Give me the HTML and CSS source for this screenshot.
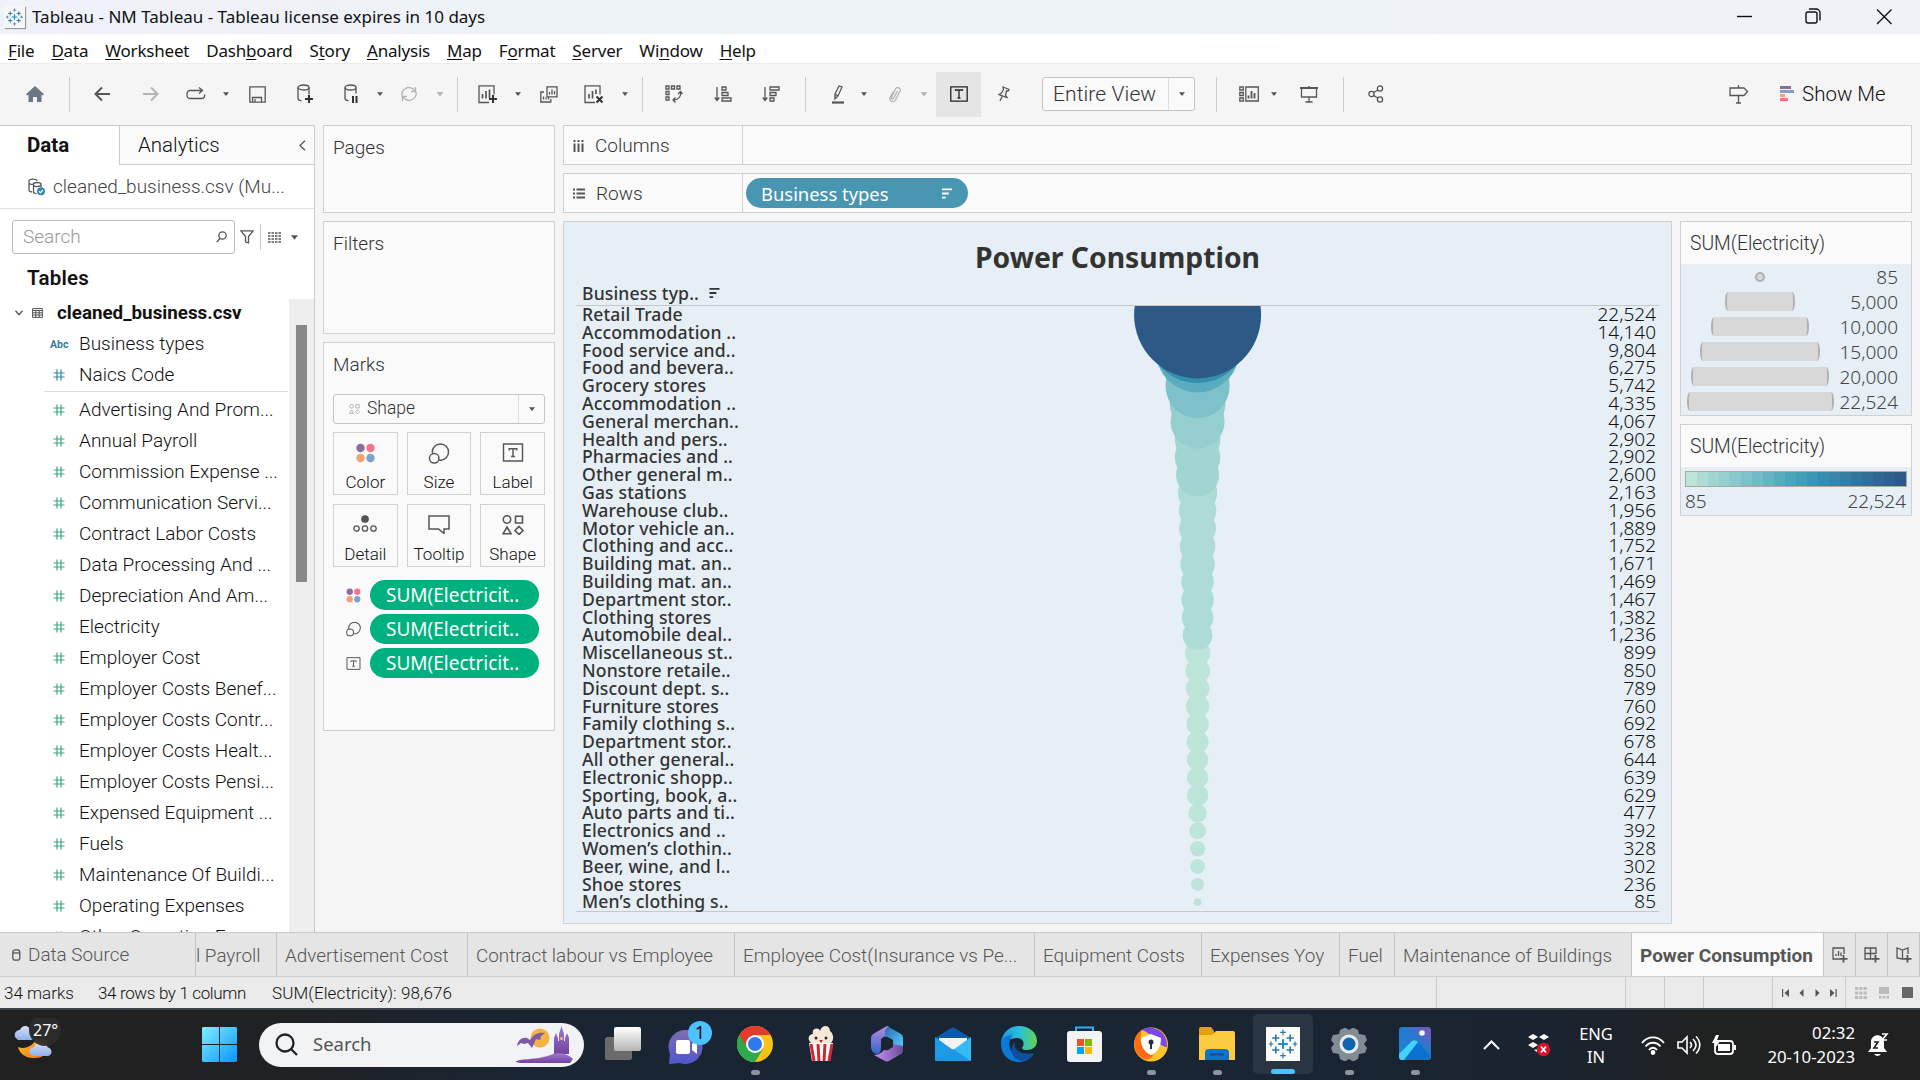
FILE: index.html
```html
<!DOCTYPE html>
<html lang="en">
<head>
<meta charset="utf-8">
<title>Tableau - NM Tableau</title>
<link rel="stylesheet" href="styles.css">
</head>
<body>
<svg class="defs" width="0" height="0">
  <symbol id="caret" viewBox="0 0 8 5"><path d="M0 0h8L4 5z" fill="currentColor"/></symbol>
  <symbol id="dots" viewBox="0 0 20 20"><circle cx="5" cy="5" r="4.2" fill="#8a6f9c"/><circle cx="15" cy="5" r="4.2" fill="#f9728a"/><circle cx="5" cy="15" r="4.2" fill="#f3a173"/><circle cx="15" cy="15" r="4.2" fill="#7ba3cc"/></symbol>
  <symbol id="size" viewBox="0 0 22 22"><g fill="none" stroke="currentColor" stroke-width="1.5"><circle cx="12.5" cy="9.5" r="8.5"/><circle cx="6" cy="16" r="5" fill="#fafafa"/></g></symbol>
  <symbol id="label" viewBox="0 0 22 20"><g fill="none" stroke="currentColor" stroke-width="1.5"><path d="M1 1h20v18H1zM7 8V6h8v2M11 6v8M9 14.3h4"/></g></symbol>
  <symbol id="shapes" viewBox="0 0 22 20"><g fill="none" stroke="currentColor" stroke-width="1.6"><circle cx="5" cy="4.5" r="3.7"/><path d="M13.5 1.2h7v6.8h-7zM5 12l4 6.8H1zM17 11.5l4 4-4 4-4-4z"/></g></symbol>
  <symbol id="hash" viewBox="0 0 12 12"><path d="M4 .5v11M8 .5v11M.5 4h11M.5 8h11" fill="none" stroke="currentColor" stroke-width="1.2"/></symbol>
  <symbol id="sort" viewBox="0 0 11 11"><path d="M0 1h11M0 5.5h7.5M0 10h4" stroke="currentColor" stroke-width="2"/></symbol>
  <symbol id="tab-logo" viewBox="0 0 40 40"><g stroke="#2d75a8" stroke-width="2" fill="none"><path d="M20 14v12M14 20h12" stroke-width="2.6" stroke="#1b8fc4"/><path d="M11 8v9M6.500 12.500h9M29 8v9M24.500 12.500h9M11 23v9M6.500 27.500h9M29 23v9M24.500 27.500h9"/><path d="M20 2v7M16.500 5.500h7M20 31v7M16.500 34.500h7M5 17v6M2 20h6M35 17v6M32 20h6" stroke-width="1.500"/></g></symbol>
</svg>

<header class="titlebar">
  <span class="app-logo"><svg width="19" height="20"><use href="#tab-logo"/></svg></span>
  <span class="app-title">Tableau - NM Tableau - Tableau license expires in 10 days</span>
  <svg class="winctl" width="160" height="20" fill="none" stroke="#111" stroke-width="1.4"><path d="M1 9.500h15"/><rect x="70" y="5" width="11" height="11" rx="2"/><path d="M73 2h7a4 4 0 0 1 4 4v7.500"/><path d="M141 2.500l14.500 14.500M155.500 2.500L141 17"/></svg>
</header>

<nav class="menubar">
  <span><u>F</u>ile</span><span><u>D</u>ata</span><span><u>W</u>orksheet</span><span>Dash<u>b</u>oard</span><span>S<u>t</u>ory</span><span><u>A</u>nalysis</span><span><u>M</u>ap</span><span>F<u>o</u>rmat</span><span><u>S</u>erver</span><span>Wi<u>n</u>dow</span><span><u>H</u>elp</span>
</nav>

<div class="toolbar">
  <svg width="18" height="17" fill="#6b7684"><path d="M9 0L0 8.300l1.200 1.200 1.300-1.100V16H7v-5h4v5h4.500V8.400l1.300 1.100L18 8.300z"/></svg>
  <i class="sep first"></i>
  <svg width="17" height="16" class="ln w2"><path d="M16 8H1.500M8 1.500L1.500 8 8 14.500"/></svg>
  <svg width="17" height="16" class="ln w2 dim"><path d="M1 8h14.500M9 1.500L15.500 8 9 14.500"/></svg>
  <svg width="20" height="14" class="ln"><path d="M9 11.500H4A3 3 0 0 1 1 8.500v-2a3 3 0 0 1 3-3h12M13 .5l3.500 3-3.500 3M9 11.500h7a3 3 0 0 0 2.500-4"/></svg>
  <svg class="caret"><use href="#caret"/></svg>
  <svg width="17" height="17" class="ln"><path d="M.8.8h15.400v15.400H.8zM3.500 16v-4.500h9V16M6 16v-3"/></svg>
  <svg width="18" height="20" class="ln"><ellipse cx="7.500" cy="3.500" rx="5.500" ry="2.500"/><path d="M2 3.500v11c0 1.300 1 2 3.500 2.300M13 3.500v7"/><path d="M13 11v8M9 15h8" stroke="#333" stroke-width="2"/></svg>
  <svg width="18" height="20" class="ln"><ellipse cx="8.500" cy="3.500" rx="5.500" ry="2.500"/><path d="M3 3.500v11c0 1.300 1 2 3.500 2.300M14 3.500v6"/><path d="M11 12v7M14.500 12v7" stroke="#333" stroke-width="2"/></svg>
  <svg class="caret"><use href="#caret"/></svg>
  <svg width="18" height="16" class="ln dim"><path d="M2 10A7 7 0 0 1 13 3l2 2M16 6a7 7 0 0 1-11 7l-2-2M15.500 1v4.500H11M2.500 15v-4.500H7"/></svg>
  <svg class="caret dim"><use href="#caret"/></svg>
  <i class="sep"></i>
  <svg width="20" height="19" class="ln"><path d="M11 17.500H1V.8h15v8.700"/><path d="M4.500 13.500V9M8 13.500V6M11.500 13.500V4.500" stroke-width="1.700"/><path d="M15 10v8M11 14h8" stroke="#333" stroke-width="2"/></svg>
  <svg class="caret"><use href="#caret"/></svg>
  <svg width="18" height="17" class="ln"><path d="M7 .8h10v10H7zM4 6H.8v10h10v-3M3.500 13.500v-3M6 13.500v-2M8.500 13.500v-2M9.500 8.500V6M12 8.500V3.500M14.500 8.500V5"/></svg>
  <svg width="20" height="19" class="ln"><path d="M11 17.500H1V.8h15v8.700"/><path d="M5 13.500V9M8.500 13.500V6M12 9V4.500" stroke-width="1.700"/><path d="M12.500 11.500l6 6M18.500 11.500l-6 6" stroke="#333" stroke-width="2"/></svg>
  <svg class="caret"><use href="#caret"/></svg>
  <i class="sep"></i>
  <svg width="18" height="18" class="ln"><path d="M1 1h3v3H1zM6.500 1h3v3h-3zM12 1h3v3h-3zM1 6.500h3v3H1zM1 12h3v3H1zM15.500 7c1 5-3 8-7 8M13 9l2.500-2.500L17.500 9M10.500 12.500L8 15l2.500 2.500"/></svg>
  <svg width="18" height="16" class="ln"><path d="M3 1v13M.7 11.500L3 14.500l2.300-3M8 1h4v3H8zM8 6.500h6v3H8zM8 12h9v3H8z"/></svg>
  <svg width="18" height="16" class="ln"><path d="M3 1v13M.7 11.500L3 14.500l2.300-3M8 1h9v3H8zM8 6.500h6v3H8zM8 12h4v3H8z"/></svg>
  <i class="sep"></i>
  <svg width="14" height="19" class="ln"><path d="M4 9l4-8 3 1-4 9-3 3zM4 9l3 2"/><path d="M1 17.500h12" stroke-width="2.200"/></svg>
  <svg class="caret"><use href="#caret"/></svg>
  <svg width="14" height="17" class="ln dim"><path d="M9.500 5l-4 7.500c-.6 1.200-2.600.4-2-1L7.500 3c1.300-2.800 5.800-1 4.500 2L7.500 14c-1.500 3-6.800 1.500-5.300-2.500L5 6"/></svg>
  <svg class="caret dim"><use href="#caret"/></svg>
  <span class="tbtn"><svg width="18" height="16" class="ln dark"><path d="M.8.8h16.400v14.400H.8zM5.500 5V4h7v1M9 4v8M7.500 12h3"/></svg></span>
  <svg width="14" height="16" class="ln"><path d="M7 1l6 2.500-1 1.500-1.500 0-1 4 1.500 2.500L3 8.500 5.500 7l2-3.500zM6 10.500L4 15"/></svg>
  <span class="select view-select"><span>Entire View</span><b><svg class="caret"><use href="#caret"/></svg></b></span>
  <i class="sep"></i>
  <svg width="20" height="16" class="ln"><path d="M.8 1h3.500v3H.8zM.8 6.500h3.500v3H.8zM.8 12h3.500v3H.8zM6.800 1h12.500v14H6.800z"/><path d="M9.500 12.500v-3M12.500 12.500V5M15.500 12.500V7" stroke-width="1.800"/></svg>
  <svg class="caret"><use href="#caret"/></svg>
  <svg width="18" height="17" class="ln"><path d="M0 2h18" stroke-width="2"/><path d="M1.500 3v8h15V3M9 11v5M5.500 16h7M9 0v2"/></svg>
  <i class="sep"></i>
  <svg width="16" height="18" class="ln"><circle cx="3.500" cy="9" r="2.600"/><circle cx="12" cy="3.500" r="2.600"/><circle cx="12" cy="14.500" r="2.600"/><path d="M5.700 7.500L9.800 5M5.700 10.500l4.100 2.500"/></svg>
  <i></i>
  <svg width="20" height="19" class="ln"><path d="M1 3h14l3.500 3.500L15 10.500H1zM9.500 0v3M9.500 10.500v7.500M7 18h5"/></svg>
  <span class="showme"><svg width="14" height="16"><path fill="#8a6f9c" d="M0 0h11v3H0z"/><path fill="#7ba3cc" d="M0 4h14v3H0z"/><path fill="#f3a173" d="M0 8h5v3H0z"/><path fill="#f9728a" d="M0 12h8v3H0z"/></svg>Show Me</span>
</div>

<main class="workspace">
  <aside class="data-pane">
    <div class="pane-tabs"><b>Data</b><span>Analytics<svg width="7" height="11" class="ln"><path d="M6 .8L1 5.500 6 10.200"/></svg></span></div>
    <div class="source"><svg width="18" height="18" class="ln"><path d="M9 3C9 .5 1 .5 1 3v9c0 1 1 1.800 3 2M1 5c1 1.500 3 1.500 4 1M13 6c0-2-7.500-2-7.500 0v8c0 1 1 1.500 3 1.700M13 6v3M5.500 7.500C7 9 11 9 13 7"/><circle cx="13" cy="13.300" r="4" fill="#2e86ab" stroke="none"/><path d="M11 13.300l1.500 1.500 2.500-3" stroke="#fff"/></svg><span>cleaned_business.csv (Mu...</span></div>
    <div class="search-row">
      <div class="search"><span>Search</span><svg width="11" height="12" class="ln"><circle cx="6.500" cy="4.500" r="3.700"/><path d="M4 7.500L.8 11"/></svg></div>
      <svg width="14" height="14" class="ln"><path d="M.8.8h12.400L8.500 6.500v6.300l-3-1V6.500z"/></svg>
      <i class="vline"></i>
      <svg width="13" height="11"><path d="M0 1h13M0 4h13M0 7h13M0 10h13" stroke="#555" stroke-width="1.500" stroke-dasharray="2.500 1"/></svg>
      <svg class="caret"><use href="#caret"/></svg>
    </div>
    <h3>Tables</h3>
    <div class="fields-wrap">
      <div class="fields" id="fields">
        <div class="table-name"><svg width="8" height="6" class="ln"><path d="M.5.8L4 4.800 7.500.8"/></svg><svg width="11" height="10" class="ln thin"><path d="M.6.6h9.800v8.800H.6zM.6 2.500h9.800M.6 4.800h9.800M.6 7h9.800M3.800 2v7.500M7.200 2v7.500"/></svg><b>cleaned_business.csv</b></div>
        <div class="field dim-field"><em>Abc</em><span>Business types</span></div>
        <div class="field dim-field last"><svg><use href="#hash"/></svg><span>Naics Code</span></div>
      </div>
      <div class="track"><div class="thumb"></div></div>
    </div>
  </aside>

  <section class="cards">
    <div class="card pages">Pages</div>
    <div class="card filters">Filters</div>
    <div class="card marks">
      <div class="card-title">Marks</div>
      <div class="select mark-type"><svg width="11" height="10"><use href="#shapes"/></svg><span>Shape</span><b><svg class="caret"><use href="#caret"/></svg></b></div>
      <div class="mark-grid">
        <div><svg width="21" height="20"><use href="#dots"/></svg>Color</div>
        <div><svg width="22" height="21"><use href="#size"/></svg>Size</div>
        <div><svg width="22" height="19"><use href="#label"/></svg>Label</div>
        <div><svg width="24" height="19" class="ln"><circle cx="12" cy="4" r="3.200" fill="#555"/><circle cx="3.500" cy="13.500" r="2.700"/><circle cx="12" cy="13.500" r="2.700"/><circle cx="20.500" cy="13.500" r="2.700"/></svg>Detail</div>
        <div><svg width="22" height="19" class="ln w15"><path d="M1 1h20v13h-5v4.500L10.500 14H1z"/></svg>Tooltip</div>
        <div><svg width="22" height="20"><use href="#shapes"/></svg>Shape</div>
      </div>
      <div class="mark-pill"><svg width="15" height="15"><use href="#dots"/></svg><span>SUM(Electricit..</span></div>
      <div class="mark-pill"><svg width="16" height="16"><use href="#size"/></svg><span>SUM(Electricit..</span></div>
      <div class="mark-pill"><svg width="15" height="13"><use href="#label"/></svg><span>SUM(Electricit..</span></div>
    </div>
  </section>

  <section class="sheet">
    <div class="shelf"><div><svg width="11" height="12"><path d="M1.500 0v2M5.500 0v2M9.500 0v2M1.500 3.500V12M5.500 3.500V12M9.500 3.500V12" stroke="#555" stroke-width="2"/></svg>Columns</div></div>
    <div class="shelf"><div><svg width="12" height="11"><path d="M0 1.500h2M0 5.500h2M0 9.500h2M3.500 1.500H12M3.500 5.500H12M3.500 9.500H12" stroke="#555" stroke-width="1.800"/></svg>Rows</div><span class="row-pill">Business types<svg width="10" height="11"><use href="#sort"/></svg></span></div>
    <div class="sheet-body">
      <div class="view">
        <h1>Power Consumption</h1>
        <div class="col-head">Business typ..<svg width="11" height="10"><use href="#sort"/></svg></div>
        <div class="plot"><div class="labels" id="labels"></div><svg class="bubbles" id="bubbles"></svg><div class="values" id="values"></div></div>
      </div>
      <div class="legends">
        <div class="legend size-legend"><h4>SUM(Electricity)</h4><div id="size-legend"></div></div>
        <div class="legend color-legend"><h4>SUM(Electricity)</h4><div class="ramp" id="ramp"></div><p><span>85</span><span>22,524</span></p></div>
      </div>
    </div>
  </section>
</main>

<nav class="tabs">
  <span class="t-src"><svg width="9" height="12" class="ln"><rect x=".8" y=".8" width="7" height="10.400" rx="2.500"/><path d="M1 4h7"/></svg>Data Source</span><span class="t-pay">l Payroll</span><span>Advertisement Cost</span><span>Contract labour vs Employee</span><span>Employee Cost(Insurance vs Pe...</span><span>Equipment Costs</span><span>Expenses Yoy</span><span>Fuel</span><span>Maintenance of Buildings</span><span class="active">Power Consumption</span>
  <span class="new"><svg width="16" height="16" class="ln"><path d="M8 12H1V1h11v6M4 9V7M6.500 9V4M9 9V5.500"/><path d="M11.500 8v7.500M8 11.800h7.500" stroke-width="1.800"/></svg></span>
  <span class="new"><svg width="16" height="16" class="ln"><path d="M8 12H1V1h11v6M1 6.500h11M6.500 1v11"/><path d="M11.500 8v7.500M8 11.800h7.500" stroke-width="1.800"/></svg></span>
  <span class="new"><svg width="16" height="16" class="ln"><path d="M8 12H6.500L1 11V1l5.500 2L12 1v6M6.500 3v9"/><path d="M11.500 8v7.500M8 11.800h7.500" stroke-width="1.800"/></svg></span>
</nav>

<div class="status">
  <span class="s1">34 marks</span><span class="s2">34 rows by 1 column</span><span class="s3">SUM(Electricity): 98,676</span>
  <i></i><i></i><i></i><i></i>
  <i><svg width="55" height="8" fill="#555"><path d="M0 0h1.200v8H0zM7 0v8L2.500 4zM21.500 0v8L17.500 4zM33.500 0v8l4-4zM48 0v8l4.500-4zM53.500 0h1.200v8h-1.200z"/></svg></i>
  <i><svg width="59" height="12"><path d="M0 1.500h12M0 6h12M0 10.500h12" stroke="#bbb" stroke-width="3" stroke-dasharray="3.200 1.100"/><path fill="#bbb" d="M24 0h10v7H24z"/><path d="M24 10.200h10" stroke="#bbb" stroke-width="2.600" stroke-dasharray="2.600 1.100"/><path fill="#666" d="M47 0h11v11H47z"/></svg></i>
</div>

<footer class="taskbar">
  <div class="weather"><svg width="50" height="46"><defs><linearGradient id="cl" x2="0" y2="1"><stop stop-color="#d5e2fb"/><stop offset="1" stop-color="#8fb0e8"/></linearGradient><linearGradient id="mo" x2="1" y2="1"><stop stop-color="#ffc227"/><stop offset="1" stop-color="#f0701c"/></linearGradient></defs><path d="M1 19c-1-5 2-7 5-7 2-6 10-5 10 1l3 9H4z" fill="url(#cl)"/><path d="M33 22c2 12-2 19-14 18C10 40 5 34 4 29c7 3 15-1 18-8z" fill="url(#mo)"/><path d="M19 38c-5-1-5-8 1-9 2-6 11-6 13 0 6 1 6 9 0 9z" fill="url(#cl)"/><circle cx="31" cy="12" r="16" fill="#2d2d2d" opacity=".95"/></svg><b>27°</b></div>
  <svg class="start" width="36" height="36"><defs><linearGradient id="wn" x2="1" y2="1"><stop stop-color="#7df0ff"/><stop offset="1" stop-color="#0a93ff"/></linearGradient></defs><path fill="url(#wn)" d="M1 0h16v17H0V1zM18 0h16l1 1v16H18zM0 18h17v17H1l-1-1zM18 18h17v16l-1 1H18z"/></svg>
  <div class="tsearch"><svg width="24" height="24" fill="none" stroke="#222" stroke-width="2.300"><circle cx="10" cy="10" r="8.500"/><path d="M16 16l6 6"/></svg><span>Search</span><svg class="art" width="62" height="40"><defs><linearGradient id="pu" x2="0" y2="1"><stop stop-color="#a07ad2"/><stop offset="1" stop-color="#70429e"/></linearGradient></defs><circle cx="25" cy="13" r="9.500" fill="#f5b343"/><path d="M2 21c1-6 5-9 10-8l3 2c4-6 8-8 15-7l-4 3-1 4-4-1-4 9-4-5-4 1-3-1z" fill="#7c5aa8"/><path d="M39 29V13l2-5 2 5v3h1V9l2.500-8L49 9v7h1v-3l2-5 2 5v16z" fill="url(#pu)"/><path d="M1 37c1-4 20-1 37-8q12-3 20 5l-3 4H5z" fill="url(#pu)"/><path d="M45.500 12h2v3h-2z" fill="#ffd05a"/></svg></div>
  <div class="apps">
    <span><svg width="36" height="36"><defs><linearGradient id="tv" x2="0" y2="1"><stop stop-color="#fff"/><stop offset="1" stop-color="#b5b5b5"/></linearGradient></defs><rect x="0" y="11" width="27" height="23" rx="2" fill="#6b6b6b"/><rect x="9" y="1" width="27" height="24" rx="2" fill="url(#tv)"/></svg></span>
    <span><svg width="46" height="46"><defs><linearGradient id="ch" x2="0" y2="1"><stop stop-color="#7f6bb0"/><stop offset="1" stop-color="#4f57cf"/></linearGradient></defs><path d="M18 9a17 17 0 1 1-4 33L3 43l1-10A17 17 0 0 1 18 9z" fill="url(#ch)"/><rect x="10" y="19" width="14" height="14" rx="2" fill="#fff"/><path d="M26 23l5-4v14l-5-4z" fill="#fff"/><circle cx="34" cy="12" r="12" fill="#4cc2ff"/><text x="34" y="18" text-anchor="middle" class="badge">1</text></svg></span>
    <span class="run"><svg width="36" height="36" viewBox="0 0 36 36"><circle cx="18" cy="18" r="18" fill="#fbc116"/><path d="M18 18L2.400 9A18 18 0 0 0 18 36l8-13z" fill="#2da94f"/><path d="M2.400 9a18 18 0 0 1 31.200 0H18v9l-8 4z" fill="#e33b2e"/><circle cx="18" cy="18" r="9" fill="#fff"/><circle cx="18" cy="18" r="7" fill="#3079ec"/></svg></span>
    <span><svg width="28" height="36"><path d="M2 17h24l-3 18H5z" fill="#fff"/><path d="M4 18l3 17M11 18l1 17M18 18l-1 17M25 18l-3 17" stroke="#d32630" stroke-width="3"/><path d="M4 17c-5-5-1-9 2-9-2-6 6-7 7-3 2-7 10-6 10 0 4 3 4 9 1 12z" fill="#f6e8d8"/><circle cx="9" cy="12" r="1.500" fill="#3a2525"/><circle cx="19" cy="12" r="1.500" fill="#3a2525"/><path d="M12 14h4l-2 3z" fill="#c22"/></svg></span>
    <span><svg width="32" height="36"><defs><linearGradient id="of" x2="0" y2="1"><stop stop-color="#b98ad8"/><stop offset="1" stop-color="#3566cf"/></linearGradient><linearGradient id="of2" x2="1" y2="1"><stop stop-color="#2b62b5"/><stop offset="1" stop-color="#58d5fb"/></linearGradient><linearGradient id="of3" x2="1"><stop stop-color="#c995f3"/><stop offset="1" stop-color="#6a4a9c"/></linearGradient></defs><path d="M16 0l14 8q2 1 2 4v12l-10-5v-4l-9-5z" fill="url(#of2)"/><path d="M32 20v4q0 3-2 4l-12 7q-2 1-4 0L3 29q6 0 10-5h4l5-6z" fill="url(#of3)"/><path d="M18 0q-4 3-4 7v3l-4 3v9q0 6-5 6-5-2-5-7V12q0-2 2-4L14 1q2-1 4-1z" fill="url(#of)"/><path d="M10 14l6-3.500 6 3.500v7l-6 3.500-6-3.500z" fill="#1a2530"/></svg></span>
    <span><svg width="36" height="34"><path d="M0 11L18 0l18 11-8 6H8z" fill="#0a5aa8"/><path d="M4 11h28v12H4z" fill="#f3f3f3"/><path d="M0 10l18 13L0 34z" fill="#1e9be6"/><path d="M36 10v24H0l18-11z" fill="#36baf3"/><path d="M0 34h36L18 22z" fill="#2096e5"/></svg></span>
    <span><svg width="36" height="36"><defs><linearGradient id="ed" x2="1"><stop stop-color="#2294e0"/><stop offset=".5" stop-color="#28bede"/><stop offset="1" stop-color="#62d34e"/></linearGradient></defs><path d="M0 17C1 6 9 0 18 0c11 0 18 7 18 15 0 6-5 9-10 9-4 0-6-1-4-4 2-4-1-8-6-8-7 0-12 4-16 5z" fill="url(#ed)"/><path d="M0 18c0-6 6-9 12-9-7 7-3 19 4 22 7 2 12 0 17-4-4 7-10 9-15 9C8 36 0 29 0 18z" fill="#0b79d6"/><path d="M14 16c-2 8 6 14 19 11-5 8-12 9-16 7-7-3-9-13-3-18z" fill="#0d4f9c"/></svg></span>
    <span><svg width="36" height="36"><path d="M9 7V1.500h17V7" fill="none" stroke="#29b1f0" stroke-width="2"/><rect x="0" y="5" width="35" height="31" rx="3" fill="#f4f4f4"/><path fill="#f25022" d="M10 13h7v7h-7z"/><path fill="#7fba00" d="M18 13h7v7h-7z"/><path fill="#00a4ef" d="M10 21h7v7h-7z"/><path fill="#ffb900" d="M18 21h7v7h-7z"/></svg></span>
    <span class="run"><svg width="34" height="35"><circle cx="17" cy="17.500" r="17" fill="#fbc52c"/><path d="M8 3C14-2 34 1 33 20c-8 0-12-12-25-17z" fill="#7d45ec"/><path d="M8 3c-9 5-10 18-3 26 7 7 14 2 14-1C8 25 4 14 8 3z" fill="#ff6c14"/><path d="M17 7l10 4c0 8-3 14-10 17C10 25 7 19 7 11z" fill="#fff"/><circle cx="17" cy="15" r="2.500" fill="#263045"/><path d="M16 15h2v7h-2z" fill="#263045"/></svg></span>
    <span class="run"><svg width="36" height="34"><path d="M0 2q0-2 2-2h10l3 4v8H0z" fill="#e3a008"/><path d="M0 8h13l4-4h17q2 0 2 2v27H0z" fill="#fdcb40"/><path d="M6 33V26q0-4 4-4h16q4 0 4 4v7z" fill="#0f74c8"/><path d="M11 27.500h14" stroke="#0a4f91" stroke-width="2"/></svg></span>
    <span class="run current"><svg width="34" height="34"><path fill="#fafafa" d="M0 0h34v34H0z"/><use href="#tab-logo" x="1" y="1" width="32" height="32"/></svg></span>
    <span class="run"><svg width="36" height="36"><path d="M13 2h2l3 2 3-2h2l4 2 1 4 6 1 2 5-3 4 3 4-2 5-6 1-1 5-4 2h-2l-3-2-3 2h-2l-4-2-1-5-6-1-2-5 3-4-3-4 2-5 6-1 1-4z" fill="#828c95"/><circle cx="18" cy="18" r="9.500" fill="#e8ecef"/><circle cx="18" cy="18" r="6.500" fill="#0f63b3"/></svg></span>
    <span class="run"><svg width="32" height="34"><defs><linearGradient id="ph" x1="0" y1="1" x2="1" y2="0"><stop stop-color="#1585da"/><stop offset=".6" stop-color="#2a78cf"/><stop offset="1" stop-color="#8752b5"/></linearGradient></defs><rect width="32" height="33" rx="3" fill="url(#ph)"/><path d="M3 33l11-19q2-2 4 0l13 14q0 5-3 5z" fill="#0b72cf"/><path d="M0 27l13-13q3-2 6 1L5 33H3q-3 0-3-4z" fill="#45d2fa"/><circle cx="23" cy="6" r="2.800" fill="#f4f4f4"/></svg></span>
  </div>
  <div class="tray">
    <svg width="17" height="10" fill="none" stroke="#fff" stroke-width="2"><path d="M1 9l7.500-7.500L16 9"/></svg>
    <svg width="24" height="24"><path d="M6 1l5 3-5 3-5-3zM17 1l5 3-5 3-5-3zM6 9l5 3-5 3-5-3zM7 17l3-1v3z" fill="#fff"/><circle cx="16.500" cy="16.500" r="6.800" fill="#d3122c"/><path d="M14 13.500l5 6M19 13.500l-5 6" stroke="#fff" stroke-width="1.800"/></svg>
    <span class="lang">ENG<br>IN</span>
    <svg width="24" height="19" fill="none" stroke="#fff" stroke-width="1.800"><path d="M1 7c6-7.500 16-7.500 22 0M4.500 10.500c4-5 11-5 15 0M8 14c2-3 6-3 8 0"/><circle cx="12" cy="16.500" r="1.500" fill="#fff"/></svg>
    <svg width="24" height="20" fill="none" stroke="#fff" stroke-width="1.600"><path d="M1 7h4l5-5v16l-5-5H1zM13 7c2 2 2 4 0 6M16 4c4 4 4 8 0 12M19 1.500c5 5 5 12 0 17"/></svg>
    <svg width="25" height="21"><rect x="3" y="6" width="18" height="13" rx="3" fill="none" stroke="#fff" stroke-width="1.800"/><rect x="6" y="9" width="12" height="7" fill="#fff"/><path d="M22 10h2v5h-2zM4 0L0 8h4l-1 5 6-8H5l2-5z" fill="#fff"/></svg>
    <span class="clock">02:32<br>20-10-2023</span>
    <svg width="22" height="24"><path d="M1 19l3-4V9c0-9 13-9 13 0v6l3 4zM7 21h7q-3.500 4-7 0z" fill="#fff"/><path d="M7 9h4l-4 6h4" fill="none" stroke="#222" stroke-width="1.600"/><path d="M15 1h5l-5 6h5" fill="none" stroke="#fff" stroke-width="1.600"/></svg>
  </div>
</footer>
<script src="app.js"></script>
</body>
</html>
```
FILE: app.js
```js
const businesses = [
  ["Retail Trade", 22524], ["Accommodation ..", 14140], ["Food service and..", 9804], ["Food and bevera..", 6275],
  ["Grocery stores", 5742], ["Accommodation ..", 4335], ["General merchan..", 4067], ["Health and pers..", 2902],
  ["Pharmacies and ..", 2902], ["Other general m..", 2600], ["Gas stations", 2163], ["Warehouse club..", 1956],
  ["Motor vehicle an..", 1889], ["Clothing and acc..", 1752], ["Building mat. an..", 1671], ["Building mat. an..", 1469],
  ["Department stor..", 1467], ["Clothing stores", 1382], ["Automobile deal..", 1236], ["Miscellaneous st..", 899],
  ["Nonstore retaile..", 850], ["Discount dept. s..", 789], ["Furniture stores", 760], ["Family clothing s..", 692],
  ["Department stor..", 678], ["All other general..", 644], ["Electronic shopp..", 639], ["Sporting, book, a..", 629],
  ["Auto parts and ti..", 477], ["Electronics and ..", 392], ["Women’s clothin..", 328], ["Beer, wine, and l..", 302],
  ["Shoe stores", 236], ["Men’s clothing s..", 85]
];
const measures = [
  "Advertising And Prom...", "Annual Payroll", "Commission Expense ...", "Communication Servi...", "Contract Labor Costs",
  "Data Processing And ...", "Depreciation And Am...", "Electricity", "Employer Cost", "Employer Costs Benef...",
  "Employer Costs Contr...", "Employer Costs Healt...", "Employer Costs Pensi...", "Expensed Equipment ...", "Fuels",
  "Maintenance Of Buildi...", "Operating Expenses", "Other Operating Exp..."
];
const ramp = ["#bce4d8", "#aedcd5", "#a1d5d2", "#95cecf", "#89c8cc", "#7ec1ca", "#72bac6", "#66b2c2", "#59acbe", "#4ba5ba",
  "#419eb6", "#3b96b2", "#358ead", "#3586a7", "#347ea1", "#32779b", "#316f96", "#2f6790", "#2d608a", "#2c5985"];
const MIN = 85, MAX = 22524, STEP = 605 / 34, MAX_R = 63.5, CENTER_X = 457.6;
const byId = id => document.getElementById(id);
const format = n => n.toLocaleString("en-US");

byId("labels").innerHTML = businesses.map(b => `<span>${b[0]}</span>`).join("");
byId("values").innerHTML = businesses.map(b => `<span>${format(b[1])}</span>`).join("");

// The largest mark comes last so that it is painted on top.
byId("bubbles").innerHTML = businesses.map(([, v], i) => {
  const color = ramp[Math.min(19, Math.floor((v - MIN) / (MAX - MIN) * 20))];
  return `<circle cx="${CENTER_X}" cy="${(i + 0.5) * STEP}" r="${MAX_R * Math.sqrt(v / MAX)}" fill="${color}"/>`;
}).reverse().join("");

byId("ramp").innerHTML = ramp.map(c => `<i style="background:${c}"></i>`).join("");

const sizes = [[85, 10], [5000, 70], [10000, 98], [15000, 120], [20000, 138], [22524, 147]];
byId("size-legend").innerHTML = sizes.map(([v, w], i) =>
  `<div><span><i class="${i ? "band" : "dot"}" style="width:${w}px"></i></span><em>${format(v)}</em></div>`).join("");

byId("fields").insertAdjacentHTML("beforeend", measures.map(m =>
  `<div class="field"><svg><use href="#hash"/></svg><span>${m}</span></div>`).join(""));
```
FILE: styles.css
```css
* { box-sizing: border-box; }
body { margin: 0; width: 1920px; height: 1080px; overflow: hidden; display: flex; flex-direction: column; background: #f5f5f5; color: #111; font: 350 19px/24px Roboto, sans-serif; }
.defs { position: absolute; }
svg { flex: none; display: block; }
i, em { font-style: normal; }
.ln { fill: none; stroke: #555; stroke-width: 1.3; color: #555; }
.thin { stroke-width: 1; }
.w15 { stroke-width: 1.5; }
.w2 { stroke-width: 2; }
.dim { stroke: #b5b5b5; color: #b5b5b5 !important; }
.dark { stroke: #222; }
.caret { width: 6px; height: 4px; color: #555; }

.titlebar { height: 34px; flex: none; display: flex; align-items: center; background: linear-gradient(90deg, #eff2f8, #edf3f7 50%, #f0f2f8); padding-left: 4px; }
.app-logo { width: 21px; height: 22px; padding: 1px; background: #f7f7f7; box-shadow: 1px 1px 1px #999; }
.app-title { margin-left: 7px; flex: 1; font: 400 17px/36px "Noto Sans", sans-serif; }
.winctl { margin-right: 24px; }

.menubar { height: 30px; flex: none; display: flex; gap: 17px; padding-left: 8px; background: #fff; border-bottom: 1px solid #eee; font: 400 17px/33px "Noto Sans", sans-serif; letter-spacing: -.2px; }
.menubar u { text-underline-offset: 2px; text-decoration-thickness: 1px; }

.toolbar { height: 61px; flex: none; display: grid; align-items: center; justify-items: center; grid-template-columns: 69px 7px 52px 44px 48px 11px 52px 44px 48px 10px 48px 13px 23px 38px 21px 41px 50px 11px 25px 38px 60px 36px 33px 32px 19px 44px 13px 57px 32px 185px 25px 40px 10px 59px 11px 54px 1fr 32px 165px; padding-bottom: 1px; }
.sep { width: 1px; height: 35px; background: #ccc; }
.sep.first { justify-self: start; }
.tbtn { width: 45px; height: 45px; background: #e5e5e5; display: grid; place-items: center; }
.select { display: flex; align-items: stretch; background: #fafafa; border: 1px solid #c4c4c4; border-radius: 3px; }
.select b { display: grid; place-items: center; width: 26px; border-left: 1px solid #ddd; }
.view-select { justify-self: end; margin-right: 9px; width: 153px; height: 34px; font-size: 21px; line-height: 33px; color: #333; }
.view-select > span { flex: 1; padding-left: 10px; white-space: nowrap; letter-spacing: .1px; }
.showme { justify-self: stretch; display: flex; align-items: center; gap: 8px; padding-left: 25px; font-size: 20.5px; }

.workspace { height: 807px; flex: none; display: flex; gap: 8px; }
.data-pane { width: 315px; height: 807px; display: flex; flex-direction: column; background: #fff; border-top: 1px solid #ccc; border-right: 1px solid #ccc; overflow: hidden; }
.pane-tabs { height: 39px; flex: none; display: flex; font-size: 20.5px; line-height: 38px; }
.pane-tabs b { width: 119px; padding-left: 27px; font-weight: 700; }
.pane-tabs span { flex: 1; display: flex; align-items: center; justify-content: space-between; padding: 0 8px 0 18px; background: #fafafa; border-left: 1px solid #ccc; border-bottom: 1px solid #ccc; }
.source { height: 44px; flex: none; display: flex; align-items: center; gap: 7px; padding-left: 28px; border-bottom: 1px solid #e0e0e0; color: #444; font-size: 19px; }
.search-row { display: flex; align-items: center; padding: 11px 0 0 12px; }
.search { width: 223px; height: 34px; display: flex; align-items: center; justify-content: space-between; padding: 0 7px 0 10px; margin-right: 5px; border: 1px solid #bbb; border-radius: 3px; color: #999; }
.vline { width: 1px; height: 26px; background: #ccc; margin: 0 7px 0 6px; }
.search-row .caret { width: 7px; height: 5px; margin-left: 10px; }
.data-pane h3 { margin: 11px 0 0 27px; font: 600 20.5px/26px Roboto, sans-serif; letter-spacing: .25px; height: 34px; }
.fields-wrap { flex: 1; min-height: 0; display: flex; justify-content: space-between; }
.fields { width: 288px; overflow: hidden; }
.track { width: 25px; background: #eee; padding: 26px 7px 0; }
.thumb { height: 257px; width: 11px; background: #888; }
.table-name { height: 29px; display: flex; align-items: center; padding: 0 0 1px 15px; }
.table-name svg + svg { margin-left: 9px; }
.table-name b { margin-left: 14px; font-weight: 700; font-size: 18.8px; }
.field { height: 31px; display: flex; align-items: center; margin-left: 44px; white-space: nowrap; }
.field svg, .field em { width: 30px; padding: 0 9px 0 9px; height: 12px; color: #3da67f; }
.field em { padding: 0 0 0 6px; font: 700 10.5px/13px Roboto, sans-serif; color: #2f7c9c; }
.field span { margin-left: 5px; }
.dim-field svg { color: #3386a8; }
.dim-field.last { height: 33px; border-bottom: 1px solid #ddd; margin-bottom: 2px; padding-bottom: 1px; }

.cards { width: 232px; display: flex; flex-direction: column; gap: 8px; color: #333; }
.card { background: #fafafa; border: 1px solid #d0d0d0; padding: 10px 9px 0; }
.pages { height: 88px; }
.filters { height: 113px; }
.marks { height: 389px; }
.card-title { height: 41px; }
.mark-type { height: 30px; font-size: 17.5px; line-height: 27px; }
.mark-type > svg { margin: 9px 7px 0 15px; color: #aaa; }
.mark-type > span { flex: 1; }
.mark-type b { width: 26px; }
.mark-grid { display: grid; grid-template-columns: repeat(3, 1fr); gap: 9px; margin: 8px 0 13px; color: #111; font-size: 17px; }
.mark-grid div { height: 63px; border: 1px solid #d0d0d0; display: flex; flex-direction: column; align-items: center; justify-content: space-between; padding: 10px 0 0; }
.mark-grid svg { color: #555; }
.mark-pill { display: flex; align-items: center; margin-bottom: 4px; }
.mark-pill svg { width: 15px; margin: 0 15px 0 13px; color: #555; }
.mark-pill span { width: 169px; height: 30px; margin-left: -6px; padding-left: 16px; border-radius: 15px; background: #00b180; color: #fff; font: 400 19px/30px "Noto Sans", sans-serif; }

.sheet { width: 1349px; display: flex; flex-direction: column; gap: 8px; }
.shelf { height: 40px; flex: none; display: flex; align-items: center; background: #fafafa; border: 1px solid #d0d0d0; color: #333; }
.shelf > div { width: 179px; height: 38px; display: flex; align-items: center; gap: 11px; padding: 1px 0 0 9px; border-right: 1px solid #d0d0d0; }
.row-pill { width: 222px; height: 30px; margin-left: 3px; padding: 0 16px 0 15px; display: flex; align-items: center; justify-content: space-between; border-radius: 15px; background: #4996b2; color: #fff; font: 400 18.4px/29px "Noto Sans", sans-serif; }
.sheet-body { display: flex; gap: 8px; align-items: flex-start; }
.view { width: 1109px; height: 703px; padding: 0 12px; background: #e6eff5; border: 1px solid #d0d0d0; color: #333; font-family: "Noto Sans", sans-serif; }
.view h1 { margin: 0; height: 59px; font-size: 28.3px; font-weight: 700; line-height: 71px; text-align: center; }
.col-head { height: 25px; display: flex; align-items: center; gap: 10px; padding-left: 6px; border-bottom: 1px solid #c8c8c8; font-size: 17.6px; font-weight: 500; letter-spacing: .13px; }
.plot { height: 606px; display: grid; grid-template-columns: 164px 1fr 100px; border-bottom: 1px solid #c8c8c8; }
.labels, .values { display: grid; grid-template-rows: repeat(34, 17.8px); line-height: 17px; }
.labels { padding-left: 6px; font-size: 17.6px; font-weight: 500; letter-spacing: .13px; white-space: nowrap; }
.values { padding-right: 3px; text-align: right; font-size: 19px; font-weight: 350; color: #111; }
.bubbles { width: 100%; height: 605px; overflow: hidden; }

.legends { width: 232px; display: flex; flex-direction: column; gap: 8px; }
.legend { background: #e6eff5; border: 1px solid #d0d0d0; font: 350 19px/24px "Noto Sans", sans-serif; color: #444; }
.legend h4 { margin: 0; height: 42px; padding-left: 9px; background: #fafafa; font: 350 19.3px/44px Roboto, sans-serif; color: #333; }
.size-legend { height: 195px; }
.size-legend > div > div { display: flex; height: 25px; align-items: center; }
.size-legend span { width: 158px; height: 25px; display: grid; place-items: center; }
.size-legend em { flex: 1; text-align: right; padding-right: 13px; line-height: 25px; padding-top: 2px; }
.dot { height: 10px; border: 2px solid #b0b0b0; border-radius: 50%; background: #d8d8d8; }
.band { height: 19px; border: solid #b0b0b0; border-width: 0 2px; border-radius: 3px / 10px; background: #d8d8d8; }
.color-legend { height: 92px; }
.ramp { display: flex; height: 16px; margin: 4px 4px 0; border: 1px solid #b0a898; }
.ramp i { flex: 1; }
.color-legend p { margin: 2px 5px 0 4px; display: flex; justify-content: space-between; }

.tabs { height: 45px; flex: none; display: flex; background: #e5e5e5; border-top: 1px solid #c8c8c8; border-bottom: 1px solid #ccc; line-height: 45px; color: #555; white-space: nowrap; font-size: 18.9px; }
.tabs > span { flex: none; height: 43px; border-right: 1px solid #c4c4c4; padding-left: 8px; overflow: hidden; }
.tabs > span:nth-child(3) { width: 191px; }
.tabs > span:nth-child(4) { width: 267px; }
.tabs > span:nth-child(5) { width: 300px; }
.tabs > span:nth-child(6) { width: 167px; }
.tabs > span:nth-child(7) { width: 138px; }
.tabs > span:nth-child(8) { width: 55px; }
.tabs > span:nth-child(9) { width: 237px; }
.tabs > .t-src { width: 196px; display: flex; align-items: center; gap: 7px; padding-left: 12px; }
.tabs > .t-pay { width: 81px; padding: 0; }
.tabs > .active { width: 192px; background: #fafafa; font-weight: 700; font-size: 19px; }
.tabs > .new { flex: 1; padding: 0; display: grid; place-items: center; }

.status { height: 31px; flex: none; display: flex; background: #eaeaea; font-size: 17px; line-height: 32px; white-space: nowrap; }
.s1 { width: 98px; padding-left: 4px; }
.s2 { width: 174px; letter-spacing: -.35px; }
.s3 { flex: 1; letter-spacing: .12px; }
.status i { display: flex; align-items: center; border-left: 1px solid #ccc; padding-left: 9px; width: 39px; }
.status i:nth-of-type(1) { width: 189px; }
.status i:nth-of-type(4) { width: 69px; }
.status i:nth-of-type(5) { width: 73px; }
.status i:nth-of-type(6) { width: 75px; }

.taskbar { flex: 1; display: flex; align-items: center; border-top: 2px solid #3c444a; background: linear-gradient(90deg, #212121 0, #202123 15%, #192532 27%, #192533 60%, #192430 80%, #202121 89%, #212121); color: #fff; font: 400 17px/29px "Noto Sans", sans-serif; }
.weather { width: 202px; padding-left: 14px; height: 66px; padding-top: 6px; position: relative; }
.weather b { position: absolute; left: 33px; top: 1px; font-size: 16px; font-weight: 400; line-height: 34px; }
.tsearch { width: 325px; height: 44px; margin-left: 21px; padding-left: 16px; display: flex; align-items: center; border-radius: 22px; background: #f1f3f4; color: #555; font-size: 18.5px; line-height: 26px; }
.tsearch span { flex: 1; padding: 0 0 3px 14px; }
.tsearch .art { margin-right: 7px; }
.apps { margin-left: 6px; display: grid; grid-template-columns: repeat(13, 66px); height: 70px; }
.apps span { display: grid; place-items: center; position: relative; height: 68px; }
.run::after { content: ""; position: absolute; bottom: 3px; left: 29px; width: 9px; height: 5px; border-radius: 3px; background: #8d949b; }
.apps .current { width: 60px; height: 60px; margin: 4px 3px; border-radius: 5px; background: #2a3542; }
.current::after { left: 18px; width: 24px; bottom: 0; background: #4cc2ff; }
.badge { font: 18px "Noto Sans", sans-serif; fill: #111; }
.tray { flex: 1; display: grid; grid-template-columns: 78px 18px 96px 18px 54px 16px 123px 46px; align-items: center; justify-items: center; margin-left: 4px; }
.lang { text-align: center; font-size: 16.5px; line-height: 23px; }
.clock { justify-self: end; text-align: right; font-size: 16.8px; line-height: 24px; white-space: nowrap; }
```
